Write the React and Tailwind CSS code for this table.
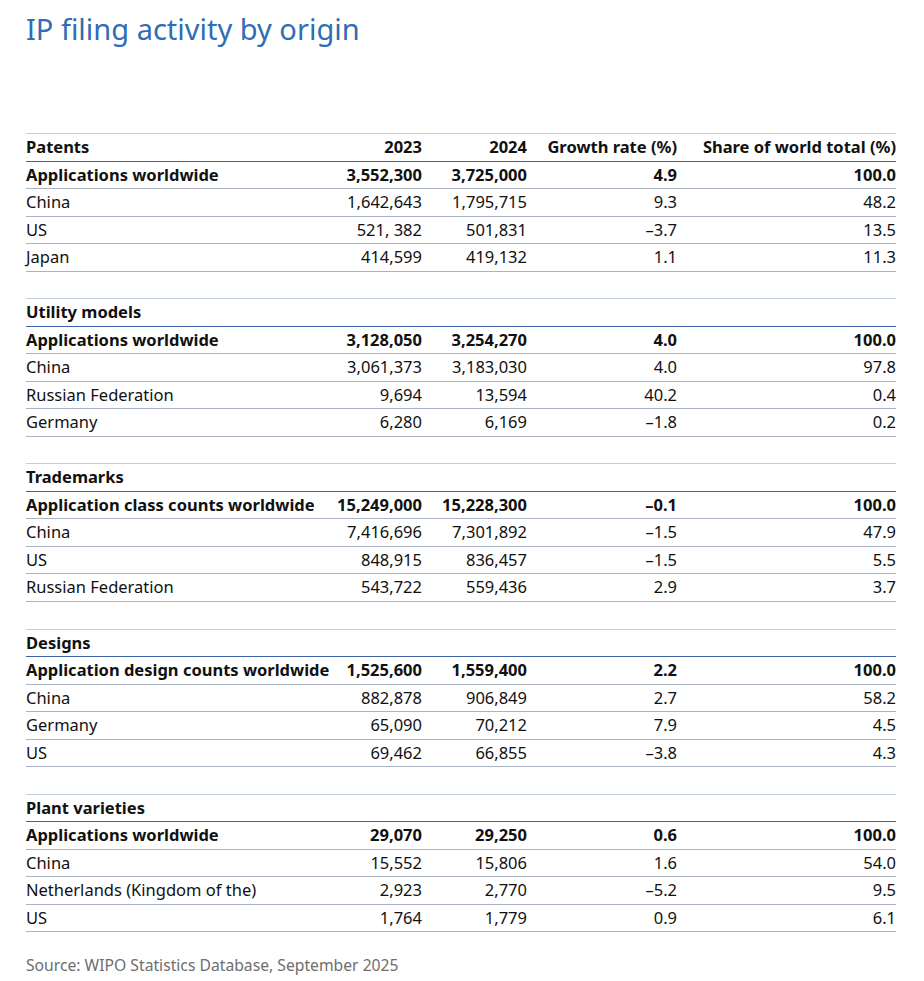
import React from "react";

const sections = [
  {
    title: "Patents",
    header: true,
    total: ["Applications worldwide", "3,552,300", "3,725,000", "4.9", "100.0"],
    rows: [
      ["China", "1,642,643", "1,795,715", "9.3", "48.2"],
      ["US", "521, 382", "501,831", "–3.7", "13.5"],
      ["Japan", "414,599", "419,132", "1.1", "11.3"],
    ],
  },
  {
    title: "Utility models",
    total: ["Applications worldwide", "3,128,050", "3,254,270", "4.0", "100.0"],
    rows: [
      ["China", "3,061,373", "3,183,030", "4.0", "97.8"],
      ["Russian Federation", "9,694", "13,594", "40.2", "0.4"],
      ["Germany", "6,280", "6,169", "–1.8", "0.2"],
    ],
  },
  {
    title: "Trademarks",
    total: ["Application class counts worldwide", "15,249,000", "15,228,300", "–0.1", "100.0"],
    rows: [
      ["China", "7,416,696", "7,301,892", "–1.5", "47.9"],
      ["US", "848,915", "836,457", "–1.5", "5.5"],
      ["Russian Federation", "543,722", "559,436", "2.9", "3.7"],
    ],
  },
  {
    title: "Designs",
    total: ["Application design counts worldwide", "1,525,600", "1,559,400", "2.2", "100.0"],
    rows: [
      ["China", "882,878", "906,849", "2.7", "58.2"],
      ["Germany", "65,090", "70,212", "7.9", "4.5"],
      ["US", "69,462", "66,855", "–3.8", "4.3"],
    ],
  },
  {
    title: "Plant varieties",
    total: ["Applications worldwide", "29,070", "29,250", "0.6", "100.0"],
    rows: [
      ["China", "15,552", "15,806", "1.6", "54.0"],
      ["Netherlands (Kingdom of the)", "2,923", "2,770", "–5.2", "9.5"],
      ["US", "1,764", "1,779", "0.9", "6.1"],
    ],
  },
];

function Row({ cells, bold, border }) {
  return (
    <div
      className={`grid grid-cols-[296px_100px_105px_150px_219px] h-[27.5px] items-center ${border} ${bold ? "font-bold" : ""}`}
    >
      {cells.map((c, i) => (
        <div key={i} className={`leading-none whitespace-nowrap ${i === 0 ? "text-left" : "text-right"}`}>
          {c}
        </div>
      ))}
    </div>
  );
}

export default function App() {
  return (
    <div className="w-[924px] h-[981px] bg-white px-[26px] text-[#111111]" style={{ fontFamily: '"Noto Sans", sans-serif' }}>
      <h1 className="pt-[10px] text-[29px] leading-[38px] text-[#2f6db5] font-normal">IP filing activity by origin</h1>
      <div className="mt-[85px] w-[870px] text-[16.5px]">
        {sections.map((s, si) => (
          <div key={si} className={si > 0 ? "mt-[26.7px]" : ""}>
            <div className="border-t border-[#c2cce4]">
              <Row
                cells={s.header ? [s.title, "2023", "2024", "Growth rate (%)", "Share of world total (%)"] : [s.title, "", "", "", ""]}
                bold
                border="border-b-[1.5px] border-[#3f63a8]"
              />
            </div>
            <Row cells={s.total} bold border="border-b border-[#aab2c6]" />
            {s.rows.map((r, ri) => (
              <Row key={ri} cells={r} border="border-b border-[#aab2c6]" />
            ))}
          </div>
        ))}
      </div>
      <div className="mt-[22px] text-[15.7px] text-[#6e6e6e]">Source: WIPO Statistics Database, September 2025</div>
    </div>
  );
}
